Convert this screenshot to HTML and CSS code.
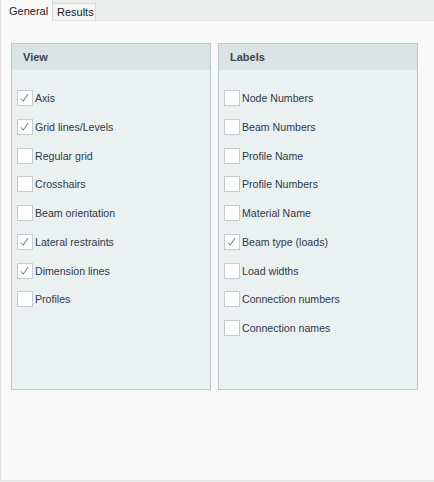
FILE: index.html
```html
<!DOCTYPE html>
<html>
<head>
<meta charset="utf-8">
<link rel="stylesheet" href="styles.css">
</head>
<body>
<div class="window">
  <div class="tabs">
    <div class="tab active">General</div>
    <div class="tab">Results</div>
    <div class="tab-fill"></div>
  </div>
  <div class="content">
    <div class="panel">
      <div class="panel-head">View</div>
      <div class="panel-body">
        <div class="row"><span class="box on"><svg viewBox="0 0 16 16"><polyline points="3.5,8.5 6,11.5 11.5,3.5"/></svg></span><span>Axis</span></div>
        <div class="row"><span class="box on"><svg viewBox="0 0 16 16"><polyline points="3.5,8.5 6,11.5 11.5,3.5"/></svg></span><span>Grid lines/Levels</span></div>
        <div class="row"><span class="box"></span><span>Regular grid</span></div>
        <div class="row"><span class="box"></span><span>Crosshairs</span></div>
        <div class="row"><span class="box"></span><span>Beam orientation</span></div>
        <div class="row"><span class="box on"><svg viewBox="0 0 16 16"><polyline points="3.5,8.5 6,11.5 11.5,3.5"/></svg></span><span>Lateral restraints</span></div>
        <div class="row"><span class="box on"><svg viewBox="0 0 16 16"><polyline points="3.5,8.5 6,11.5 11.5,3.5"/></svg></span><span>Dimension lines</span></div>
        <div class="row"><span class="box"></span><span>Profiles</span></div>
      </div>
    </div>
    <div class="panel">
      <div class="panel-head">Labels</div>
      <div class="panel-body">
        <div class="row"><span class="box"></span><span>Node Numbers</span></div>
        <div class="row"><span class="box"></span><span>Beam Numbers</span></div>
        <div class="row"><span class="box"></span><span>Profile Name</span></div>
        <div class="row"><span class="box"></span><span>Profile Numbers</span></div>
        <div class="row"><span class="box"></span><span>Material Name</span></div>
        <div class="row"><span class="box on"><svg viewBox="0 0 16 16"><polyline points="3.5,8.5 6,11.5 11.5,3.5"/></svg></span><span>Beam type (loads)</span></div>
        <div class="row"><span class="box"></span><span>Load widths</span></div>
        <div class="row"><span class="box"></span><span>Connection numbers</span></div>
        <div class="row"><span class="box"></span><span>Connection names</span></div>
      </div>
    </div>
  </div>
</div>
</body>
</html>
```
FILE: styles.css
```css
html, body {
  margin: 0;
  padding: 0;
  background: #f0f0f0;
}
body {
  font-family: "Liberation Sans", Arial, sans-serif;
  font-size: 10.6px;
  color: #2c394a;
}
.window {
  width: 434px;
  height: 482px;
  display: flex;
  flex-direction: column;
}
.tabs {
  display: flex;
  align-items: flex-end;
  height: 21px;
  background: #eceeee;
  flex: none;
}
.tab {
  box-sizing: border-box;
  height: 18px;
  width: 43px;
  padding: 0 0 0 4px;
  border: 1px solid #d9dcdc;
  border-left: none;
  border-bottom: 1px solid #e1e3e3;
  background: #f3f4f4;
  font-size: 11px;
  line-height: 17px;
  color: #1a1a1a;
}
.tab.active {
  height: 21px;
  width: 53px;
  padding: 2px 0 0 8px;
  background: #f9f9f9;
  border-top: none;
  border-left: 1px solid #e3e3e3;
  border-bottom: none;
  line-height: 18px;
}
.tab-fill {
  flex: 1;
  height: 1px;
  background: #e1e3e3;
}
.content {
  flex: none;
  box-sizing: border-box;
  height: 460px;
  background: #f9f9f9;
  border-left: 1px solid #e1e1e1;
  border-bottom: 1px solid #e3e3e3;
  padding: 22px 0 0 10px;
  display: flex;
  gap: 7px;
  align-items: flex-start;
}
.panel {
  box-sizing: border-box;
  width: 200px;
  height: 347px;
  border: 1px solid #bac7cb;
  background: #ebf0f0;
}
.panel-head {
  height: 26px;
  background: #dce3e4;
  font-weight: bold;
  color: #3d4450;
  line-height: 26px;
  padding-left: 11px;
  font-size: 11px;
}
.panel-body {
  padding: 20px 0 0 5px;
  display: flex;
  flex-direction: column;
  gap: 12.75px;
}
.row {
  height: 16px;
  display: flex;
  align-items: center;
  gap: 2px;
  line-height: 16px;
}
.box {
  box-sizing: border-box;
  width: 16px;
  height: 16px;
  border: 1px solid #c3cdd0;
  background: #ffffff;
  flex: none;
}
.box svg {
  display: block;
  width: 14px;
  height: 14px;
  fill: none;
  stroke: #555a60;
  stroke-width: 1;
}
```
